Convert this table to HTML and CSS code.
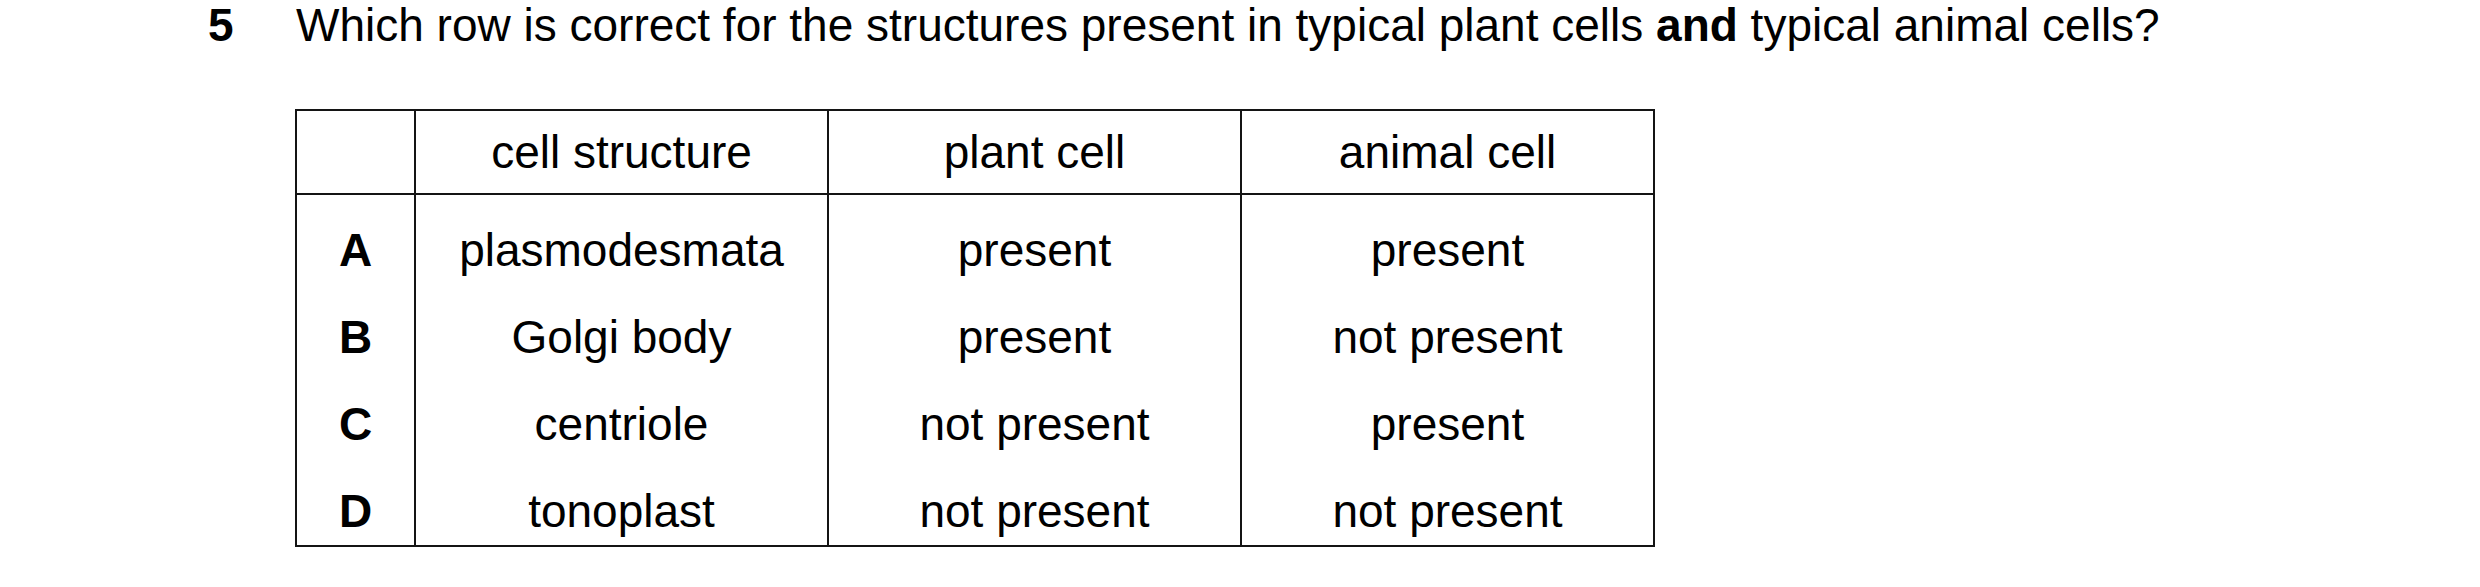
FILE: index.html
```html
<!DOCTYPE html>
<html lang="en">
<head>
<meta charset="utf-8">
<title>Question 5</title>
<link rel="stylesheet" href="styles.css">
</head>
<body>
<div class="question">
  <div class="qnum">5</div>
  <div class="qbody">
    <p class="stem">Which row is correct for the structures present in typical plant cells <b>and</b> typical animal cells?</p>
    <table class="options">
      <colgroup>
        <col class="c-key">
        <col class="c-col">
        <col class="c-col">
        <col class="c-col">
      </colgroup>
      <thead>
        <tr>
          <th></th>
          <th>cell structure</th>
          <th>plant cell</th>
          <th>animal cell</th>
        </tr>
      </thead>
      <tbody>
        <tr>
          <td class="key">A</td>
          <td>plasmodesmata</td>
          <td>present</td>
          <td>present</td>
        </tr>
        <tr>
          <td class="key">B</td>
          <td>Golgi body</td>
          <td>present</td>
          <td>not present</td>
        </tr>
        <tr>
          <td class="key">C</td>
          <td>centriole</td>
          <td>not present</td>
          <td>present</td>
        </tr>
        <tr>
          <td class="key">D</td>
          <td>tonoplast</td>
          <td>not present</td>
          <td>not present</td>
        </tr>
      </tbody>
    </table>
  </div>
</div>
</body>
</html>
```

FILE: styles.css
```css
html, body {
  margin: 0;
  padding: 0;
  background: #ffffff;
}

body {
  font-family: "Liberation Sans", Arial, sans-serif;
  font-size: 46px;
  line-height: 50px;
  color: #000000;
}

.question {
  display: flex;
  padding-left: 208px;
  padding-top: 0;
}

.qnum {
  width: 88px;
  flex: none;
  font-weight: bold;
}

.qbody {
  flex: 1;
}

.stem {
  margin: 0;
}

.stem b {
  font-weight: bold;
}

.options {
  margin-top: 59px;
  margin-left: -1px;
  border-collapse: collapse;
  table-layout: fixed;
  width: 1360px;
}

.c-key {
  width: 119px;
}

.c-col {
  width: 413px;
}

.options th,
.options td {
  border-left: 2px solid #141414;
  border-right: 2px solid #141414;
  text-align: center;
  font-weight: normal;
  padding: 0;
}

.options th {
  border-top: 2px solid #141414;
  border-bottom: 2px solid #141414;
  padding: 16px 0;
}

.options td {
  padding: 30px 0 7px;
}

.options tbody tr:last-child td {
  padding-bottom: 9px;
  border-bottom: 2px solid #141414;
}

.options td.key {
  font-weight: bold;
}
```
